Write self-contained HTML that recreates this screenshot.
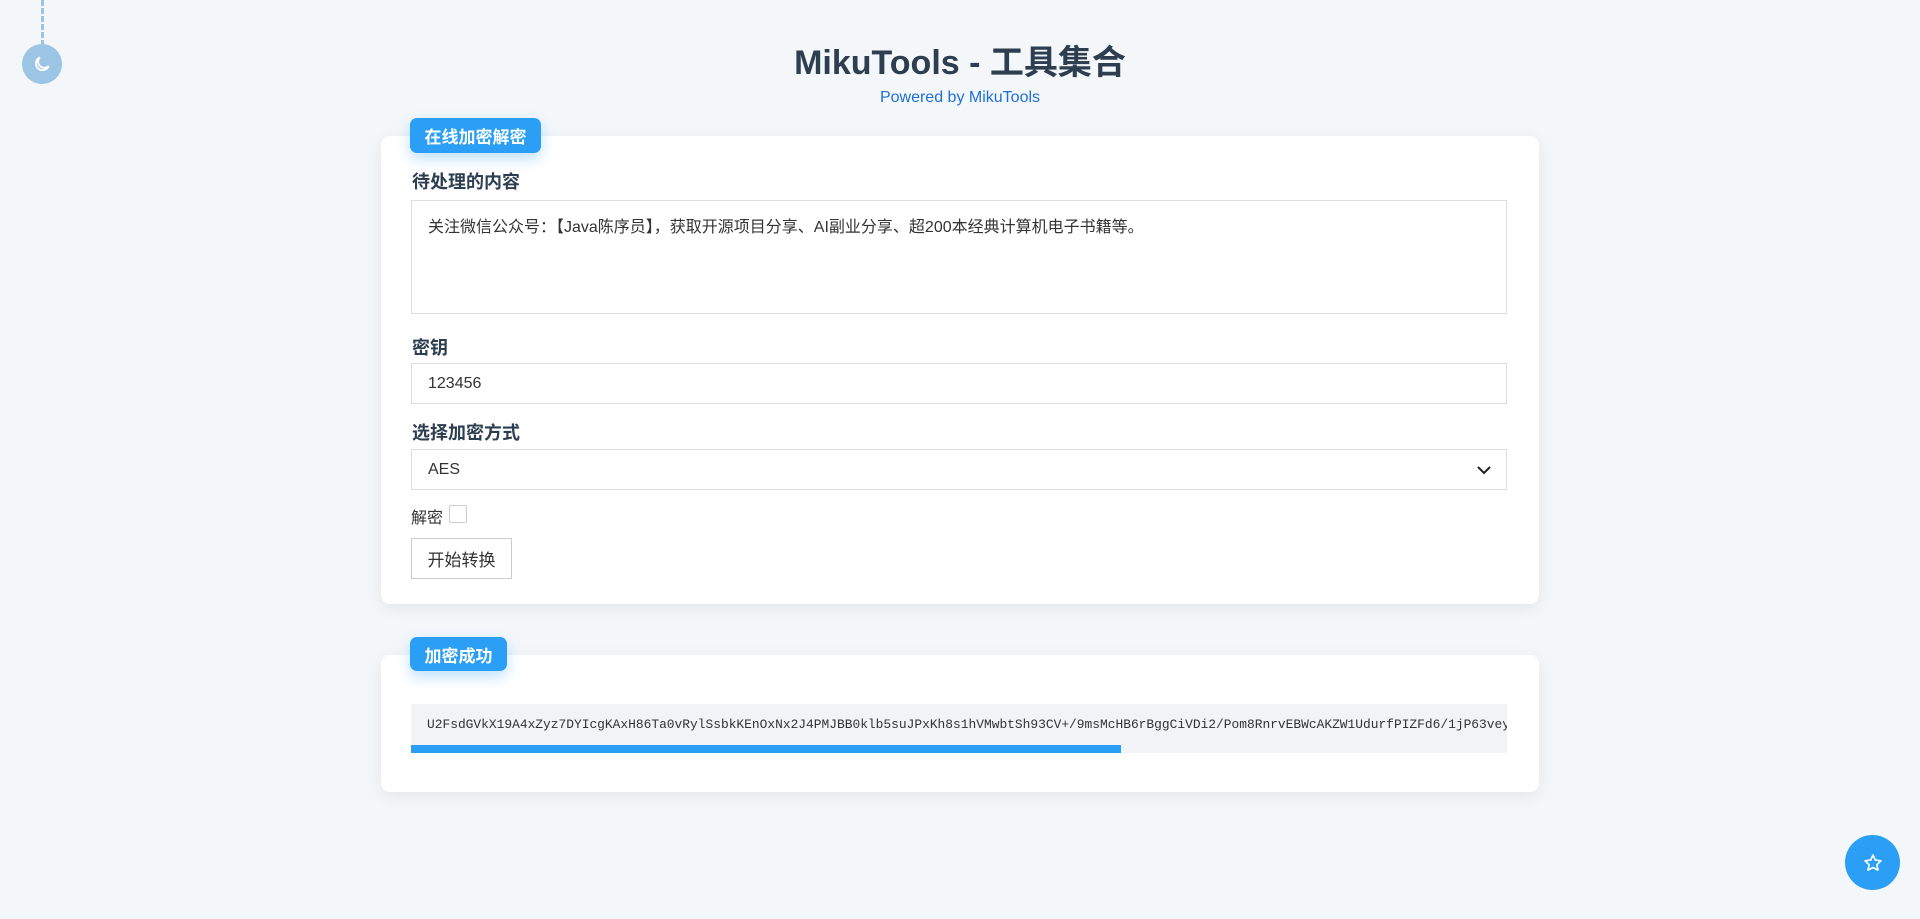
<!DOCTYPE html>
<html><head><meta charset="utf-8"><style>
*{box-sizing:border-box;margin:0;padding:0}
body{width:1920px;height:919px;background:#f3f7fa;font-family:"Liberation Sans","Noto Sans CJK SC",sans-serif;color:#2c3e50;position:relative;overflow:hidden}
.dash{position:absolute;left:41px;top:0;height:46px;border-left:3px dashed #9cc4e4}
.moon{position:absolute;left:22px;top:44px;width:40px;height:40px;border-radius:50%;background:#9cc4e4;display:flex;align-items:center;justify-content:center}
h1{position:absolute;top:35px;left:0;width:1920px;text-align:center;font-size:34px;font-weight:bold;color:#2c3e50}
.pw{position:absolute;top:89px;left:0;width:1920px;text-align:center;font-size:16px;color:#1e6fd9}
.card{position:absolute;left:381px;width:1158px;background:#fff;border-radius:9px;box-shadow:0 4px 16px rgba(0,0,0,.07)}
.badge{position:absolute;background:#2b9ff5;color:#fff;font-weight:bold;font-size:17px;border-radius:7px;display:flex;align-items:center;justify-content:center;box-shadow:0 6px 14px rgba(43,159,245,.3)}
.lbl{position:absolute;left:412px;font-size:18px;font-weight:bold;color:#2c3e50}
.box{position:absolute;left:411px;width:1096px;border:1px solid #ddd;background:#fff;font-size:16px;color:#333;padding-left:16px}
</style></head><body>
<div class="dash"></div>
<div class="moon"><svg width="20" height="20" viewBox="0 0 24 24" fill="none" stroke="#fff" stroke-width="2.2"><path d="M20 14.5A8 8 0 1 1 9.5 4a6.5 6.5 0 0 0 10.5 10.5z"/></svg></div>
<h1>MikuTools - 工具集合</h1>
<div class="pw">Powered by MikuTools</div>

<div class="card" style="top:136px;height:468px"></div>
<div class="badge" style="left:410px;top:118px;width:131px;height:35px">在线加密解密</div>
<div class="lbl" style="top:168px">待处理的内容</div>
<div class="box" style="top:200px;height:114px;padding-top:12px">关注微信公众号：【Java陈序员】，获取开源项目分享、AI副业分享、超200本经典计算机电子书籍等。</div>
<div class="lbl" style="top:334px">密钥</div>
<div class="box" style="top:363px;height:41px;line-height:39px">123456</div>
<div class="lbl" style="top:419px">选择加密方式</div>
<div class="box" style="top:449px;height:41px;line-height:39px">AES<svg style="position:absolute;right:14px;top:14px" width="16" height="12" viewBox="0 0 16 12" fill="none" stroke="#222" stroke-width="2"><path d="M2 3l6 6 6-6"/></svg></div>
<div style="position:absolute;left:411px;top:504px;font-size:16px;color:#333">解密</div>
<div style="position:absolute;left:449px;top:505px;width:18px;height:18px;border:1px solid #ccc;border-radius:2px"></div>
<div style="position:absolute;left:411px;top:538px;width:101px;height:41px;border:1px solid #ccc;font-size:17px;display:flex;align-items:center;justify-content:center;color:#333">开始转换</div>

<div class="card" style="top:655px;height:137px"></div>
<div class="badge" style="left:410px;top:637px;width:97px;height:34px">加密成功</div>
<div style="position:absolute;left:411px;top:704px;width:1096px;height:49px;background:#f2f3f5;overflow:hidden">
<div style="position:absolute;left:16px;top:13px;white-space:nowrap;font-family:'Liberation Mono',monospace;font-size:12.9px;color:#333">U2FsdGVkX19A4xZyz7DYIcgKAxH86Ta0vRylSsbkKEnOxNx2J4PMJBB0klb5suJPxKh8s1hVMwbtSh93CV+/9msMcHB6rBggCiVDi2/Pom8RnrvEBWcAKZW1UdurfPIZFd6/1jP63veyC9sKq</div>
<div style="position:absolute;left:0;bottom:0;width:710px;height:8px;background:#2b9ff5"></div>
</div>

<div style="position:absolute;left:1845px;top:835px;width:55px;height:55px;border-radius:50%;background:#2b9ff5;display:flex;align-items:center;justify-content:center"><svg width="20" height="20" viewBox="0 0 24 24" fill="none" stroke="#fff" stroke-width="2" stroke-linejoin="round"><path d="M12 2.5l2.9 6 6.6.9-4.8 4.6 1.2 6.5L12 17.4l-5.9 3.1 1.2-6.5-4.8-4.6 6.6-.9z"/></svg></div>
</body></html>
